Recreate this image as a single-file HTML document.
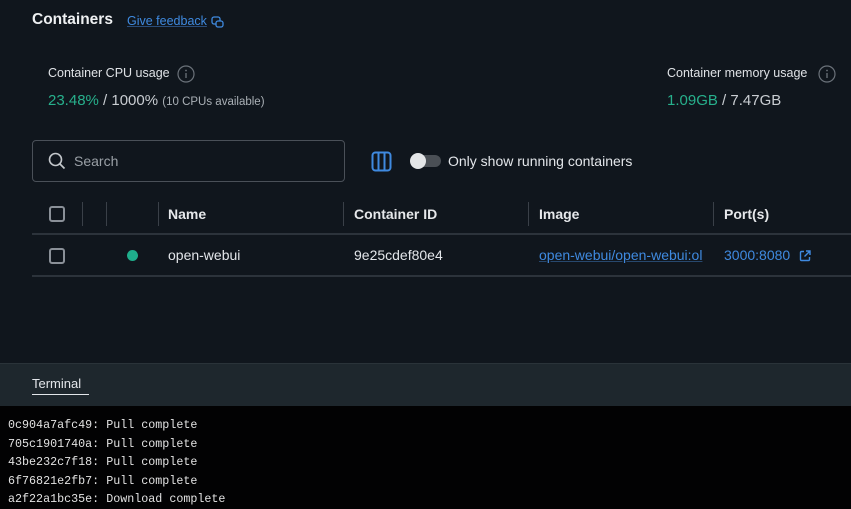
<!DOCTYPE html>
<html><head><meta charset="utf-8"><style>
*{margin:0;padding:0;box-sizing:border-box}
body{width:851px;height:509px;overflow:hidden;background:#10161d;font-family:"Liberation Sans",sans-serif;color:#e3e6ea;position:relative}
.a{position:absolute;white-space:nowrap}
.g{color:#27b08c}
.lk{color:#3f8ae0}
.hd{font-weight:bold;font-size:14px;color:#e6e8eb}
.vl{position:absolute;width:1px;background:#3a4048}
.cb{position:absolute;width:16px;height:16px;border:2px solid #8a9098;border-radius:3px}
.t{position:absolute;left:8px;font-family:"Liberation Mono",monospace;font-size:11.7px;color:#e2e2e2;white-space:nowrap}
</style></head><body>
<div class="a" style="left:32px;top:11px;font-size:15.5px;font-weight:bold;color:#eef0f2">Containers</div>
<div class="a lk" style="left:127px;top:14px;font-size:12.5px;text-decoration:underline;text-decoration-color:#2a4d7a">Give feedback</div>
<svg class="a" style="left:211px;top:16px" width="13" height="12" viewBox="0 0 13 12"><rect x="1" y="1" width="8" height="7" rx="2" fill="none" stroke="#3f8ae0" stroke-width="1.3"/><rect x="5" y="5" width="7" height="6" rx="2" fill="#10161d" stroke="#3f8ae0" stroke-width="1.3"/></svg>

<div class="a" style="left:48px;top:66px;font-size:12.5px;color:#dfe2e6">Container CPU usage</div>
<svg class="a" style="left:177px;top:65px" width="18" height="18"><circle cx="9" cy="9" r="8" fill="none" stroke="#6b727a" stroke-width="1.2"/><line x1="9" y1="8" x2="9" y2="13" stroke="#6b727a" stroke-width="1.3"/><circle cx="9" cy="5.5" r="0.9" fill="#6b727a"/></svg>
<div class="a" style="left:48px;top:92px;font-size:15px"><span class="g">23.48%</span><span style="color:#c9cdd2"> / 1000%</span> <span style="font-size:11.5px;color:#aab0b6">(10 CPUs available)</span></div>

<div class="a" style="left:667px;top:66px;font-size:12.5px;color:#dfe2e6">Container memory usage</div>
<svg class="a" style="left:818px;top:65px" width="18" height="18"><circle cx="9" cy="9" r="8" fill="none" stroke="#6b727a" stroke-width="1.2"/><line x1="9" y1="8" x2="9" y2="13" stroke="#6b727a" stroke-width="1.3"/><circle cx="9" cy="5.5" r="0.9" fill="#6b727a"/></svg>
<div class="a" style="left:667px;top:92px;font-size:15px"><span class="g">1.09GB</span><span style="color:#c9cdd2"> / 7.47GB</span></div>

<div class="a" style="left:32px;top:140px;width:313px;height:42px;border:1px solid #4a5058;border-radius:4px"></div>
<svg class="a" style="left:47px;top:151px" width="20" height="20"><circle cx="8.5" cy="8.5" r="6" fill="none" stroke="#c4c8cc" stroke-width="1.6"/><line x1="13" y1="13" x2="17.5" y2="17.5" stroke="#c4c8cc" stroke-width="1.7"/></svg>
<div class="a" style="left:74px;top:153px;font-size:14px;color:#9aa0a6">Search</div>

<svg class="a" style="left:371px;top:151px" width="21" height="21"><rect x="1.5" y="1.5" width="18" height="18" rx="3" fill="none" stroke="#3f8ae0" stroke-width="2"/><line x1="7.5" y1="2" x2="7.5" y2="19" stroke="#3f8ae0" stroke-width="2"/><line x1="13.5" y1="2" x2="13.5" y2="19" stroke="#3f8ae0" stroke-width="2"/></svg>
<div class="a" style="left:411px;top:155px;width:30px;height:12px;border-radius:6px;background:#4a4f55"></div>
<div class="a" style="left:410px;top:153px;width:16px;height:16px;border-radius:50%;background:#e4e6e8"></div>
<div class="a" style="left:448px;top:153px;font-size:14px;color:#e3e6ea">Only show running containers</div>

<div class="cb" style="left:49px;top:206px"></div>
<div class="vl" style="left:82px;top:202px;height:24px"></div>
<div class="vl" style="left:106px;top:202px;height:24px"></div>
<div class="vl" style="left:158px;top:202px;height:24px"></div>
<div class="vl" style="left:343px;top:202px;height:24px"></div>
<div class="vl" style="left:528px;top:202px;height:24px"></div>
<div class="vl" style="left:713px;top:202px;height:24px"></div>
<div class="a hd" style="left:168px;top:206px">Name</div>
<div class="a hd" style="left:354px;top:206px">Container ID</div>
<div class="a hd" style="left:539px;top:206px">Image</div>
<div class="a hd" style="left:724px;top:206px">Port(s)</div>
<div class="a" style="left:32px;top:233px;width:819px;height:2px;background:#2c333b"></div>

<div class="cb" style="left:49px;top:248px"></div>
<div class="a" style="left:127px;top:250px;width:11px;height:11px;border-radius:50%;background:#1fae8c"></div>
<div class="a" style="left:168px;top:247px;font-size:14px;color:#e3e6ea">open-webui</div>
<div class="a" style="left:354px;top:247px;font-size:14px;color:#e3e6ea">9e25cdef80e4</div>
<div class="a lk" style="left:539px;top:247px;font-size:14px;width:175px;overflow:hidden;text-decoration:underline;text-decoration-color:#27486e">open-webui/open-webui:ol</div>
<div class="a lk" style="left:724px;top:247px;font-size:14px">3000:8080</div>
<svg class="a" style="left:798px;top:249px" width="14" height="14"><path d="M6 2.5H3.5a1 1 0 0 0-1 1v7a1 1 0 0 0 1 1h7a1 1 0 0 0 1-1V8M8 2h4v4M12 2 6.5 7.5" fill="none" stroke="#3f8ae0" stroke-width="1.4"/></svg>
<div class="a" style="left:32px;top:275px;width:819px;height:2px;background:#2c333b"></div>

<div class="a" style="left:0;top:363px;width:851px;height:43px;background:#1e272d;border-top:1px solid #2a3339"></div>
<div class="a" style="left:32px;top:376px;font-size:13px;color:#e3e6ea">Terminal</div>
<div class="a" style="left:32px;top:394px;width:57px;height:1px;background:#e3e6ea"></div>
<div class="a" style="left:0;top:406px;width:851px;height:103px;background:#020203"></div>
<div class="t" style="top:418px">0c904a7afc49: Pull complete</div>
<div class="t" style="top:437px">705c1901740a: Pull complete</div>
<div class="t" style="top:455px">43be232c7f18: Pull complete</div>
<div class="t" style="top:474px">6f76821e2fb7: Pull complete</div>
<div class="t" style="top:492px">a2f22a1bc35e: Download complete</div>
</body></html>
